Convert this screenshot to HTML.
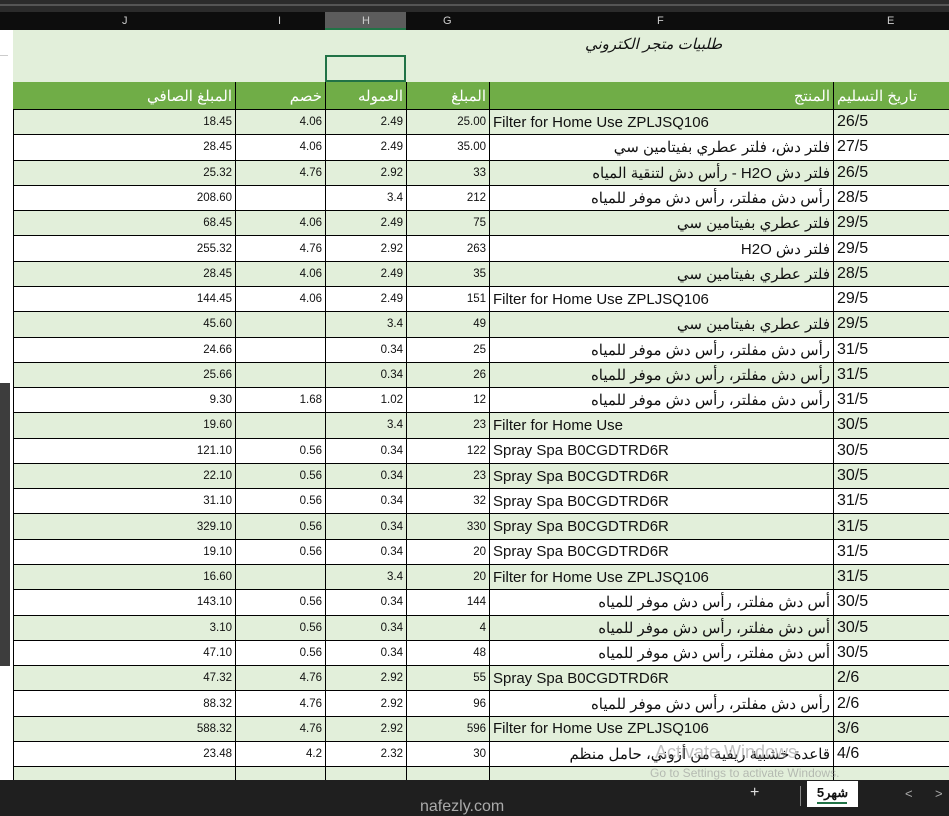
<!DOCTYPE html>
<html><head><meta charset="utf-8"><style>
*{margin:0;padding:0;box-sizing:border-box}
body{width:949px;height:816px;overflow:hidden;background:#fff;position:relative;font-family:"Liberation Sans","Noto Sans CJK SC",sans-serif}
.a{position:absolute}
.row{position:absolute;left:13px;width:936px;border-bottom:1px solid #000}
.c{position:absolute;top:0;height:100%;border-left:1px solid #000;font-size:11.5px;color:#111;display:flex;align-items:center;justify-content:flex-end;padding-right:3px;white-space:nowrap;overflow:hidden}
.f{font-size:15px;color:#111}
.en{justify-content:flex-start;padding-left:3px}
.e{justify-content:flex-start;padding-left:3px;font-size:16px}
</style></head><body>
<div class="a" style="left:0;top:0;width:949px;height:12px;background:#2b2b2b"></div>
<div class="a" style="left:0;top:4px;width:949px;height:2px;background:#555"></div>
<div class="a" style="left:0;top:12px;width:949px;height:18px;background:#0d0d0d;color:#ccc;font-size:11px">
<span class="a" style="left:122px;top:3px">J</span><span class="a" style="left:278px;top:3px">I</span>
<div class="a" style="left:325px;top:0;width:81px;height:18px;background:#5c5c5c;border-bottom:2px solid #217346"></div>
<span class="a" style="left:362px;top:3px">H</span><span class="a" style="left:443px;top:3px">G</span><span class="a" style="left:657px;top:3px">F</span><span class="a" style="left:887px;top:3px">E</span></div>
<div class="a" style="left:13px;top:30px;width:936px;height:52px;background:#e2efda"></div>
<div class="a" style="left:585px;top:35px;font-size:15px;font-style:italic;color:#111">طلبيات متجر الكتروني</div>
<div class="a" style="left:325px;top:55px;width:81px;height:27px;border:2px solid #217346"></div>
<div class="a" style="left:0;top:55px;width:8px;height:1px;background:#ccc"></div>
<div class="row" style="top:82px;height:28px;background:#70ad47">
<div class="c f" style="left:0;width:222px;color:#fff;border-left:0">المبلغ الصافي</div>
<div class="c f" style="left:222px;width:90px;color:#fff">خصم</div>
<div class="c f" style="left:312px;width:81px;color:#fff">العموله</div>
<div class="c f" style="left:393px;width:83px;color:#fff">المبلغ</div>
<div class="c f" style="left:476px;width:344px;color:#fff">المنتج</div>
<div class="c f" style="left:820px;width:116px;color:#fff;justify-content:flex-start;padding-left:3px">تاريخ التسليم</div>
</div>
<div id="t"></div>
<div class="a" style="left:0;top:383px;width:10px;height:283px;background:#3d3d3d"></div>
<div class="a" style="left:0;top:780px;width:949px;height:36px;background:#1f1f1f"></div>
<div class="a" style="left:750px;top:784px;color:#ddd;font-size:16px">+</div>
<div class="a" style="left:800px;top:786px;width:1px;height:20px;background:#888"></div>
<div class="a" style="left:807px;top:781px;width:51px;height:26px;background:#fff;color:#111;font-size:13px;text-align:center;line-height:24px;font-weight:bold">شهر5<div style="position:absolute;left:10px;bottom:3px;width:30px;height:2px;background:#217346"></div></div>
<div class="a" style="left:905px;top:786px;color:#aaa;font-size:13px">&lt;</div>
<div class="a" style="left:935px;top:786px;color:#aaa;font-size:13px">&gt;</div>
<div class="a" style="left:420px;top:798px;color:#aaa;font-size:16px">nafezly.com</div>
<div class="a" style="left:655px;top:742px;color:rgba(150,150,150,.6);font-size:18px">Activate Windows</div>
<div class="a" style="left:650px;top:766px;color:rgba(150,150,150,.6);font-size:12px">Go to Settings to activate Windows.</div>
<script>
(function(){
var A="رأس دش مفلتر، رأس دش موفر للمياه",Z="Filter for Home Use ZPLJSQ106",S="Spray Spa B0CGDTRD6R",V="فلتر عطري بفيتامين سي",B="أس دش مفلتر، رأس دش موفر للمياه";
var d=[["26/5",Z,"25.00","2.49","4.06","18.45"],["27/5","فلتر دش، فلتر عطري بفيتامين سي","35.00","2.49","4.06","28.45"],["26/5","فلتر دش H2O - رأس دش لتنقية المياه","33","2.92","4.76","25.32"],["28/5",A,"212","3.4","","208.60"],["29/5",V,"75","2.49","4.06","68.45"],["29/5","فلتر دش H2O","263","2.92","4.76","255.32"],["28/5",V,"35","2.49","4.06","28.45"],["29/5",Z,"151","2.49","4.06","144.45"],["29/5",V,"49","3.4","","45.60"],["31/5",A,"25","0.34","","24.66"],["31/5",A,"26","0.34","","25.66"],["31/5",A,"12","1.02","1.68","9.30"],["30/5","Filter for Home Use","23","3.4","","19.60"],["30/5",S,"122","0.34","0.56","121.10"],["30/5",S,"23","0.34","0.56","22.10"],["31/5",S,"32","0.34","0.56","31.10"],["31/5",S,"330","0.34","0.56","329.10"],["31/5",S,"20","0.34","0.56","19.10"],["31/5",Z,"20","3.4","","16.60"],["30/5",B,"144","0.34","0.56","143.10"],["30/5",B,"4","0.34","0.56","3.10"],["30/5",B,"48","0.34","0.56","47.10"],["2/6",S,"55","2.92","4.76","47.32"],["2/6",A,"96","2.92","4.76","88.32"],["3/6",Z,"596","2.92","4.76","588.32"],["4/6","قاعدة خشبية ريفية من أزوني، حامل منظم","30","2.32","4.2","23.48"],["","","","","",""]];
var h="";
for(var i=0;i<d.length;i++){var r=d[i],yy=110+i*25.28,bg=i%2==0?"#e2efda":"#fff";var en=/^[A-Z]/.test(r[1]);
h+='<div class="row" style="top:'+yy+'px;height:25.28px;background:'+bg+'">'+
'<div class="c" style="left:0;width:222px">'+r[5]+'</div>'+
'<div class="c" style="left:222px;width:90px">'+r[4]+'</div>'+
'<div class="c" style="left:312px;width:81px">'+r[3]+'</div>'+
'<div class="c" style="left:393px;width:83px">'+r[2]+'</div>'+
'<div class="c f'+(en?' en':'')+'" style="left:476px;width:344px"><span dir="'+(en?'ltr':'rtl')+'">'+r[1]+'</span></div>'+
'<div class="c e" style="left:820px;width:116px">'+r[0]+'</div></div>';}
document.getElementById("t").innerHTML=h;
})();
</script>
</body></html>
